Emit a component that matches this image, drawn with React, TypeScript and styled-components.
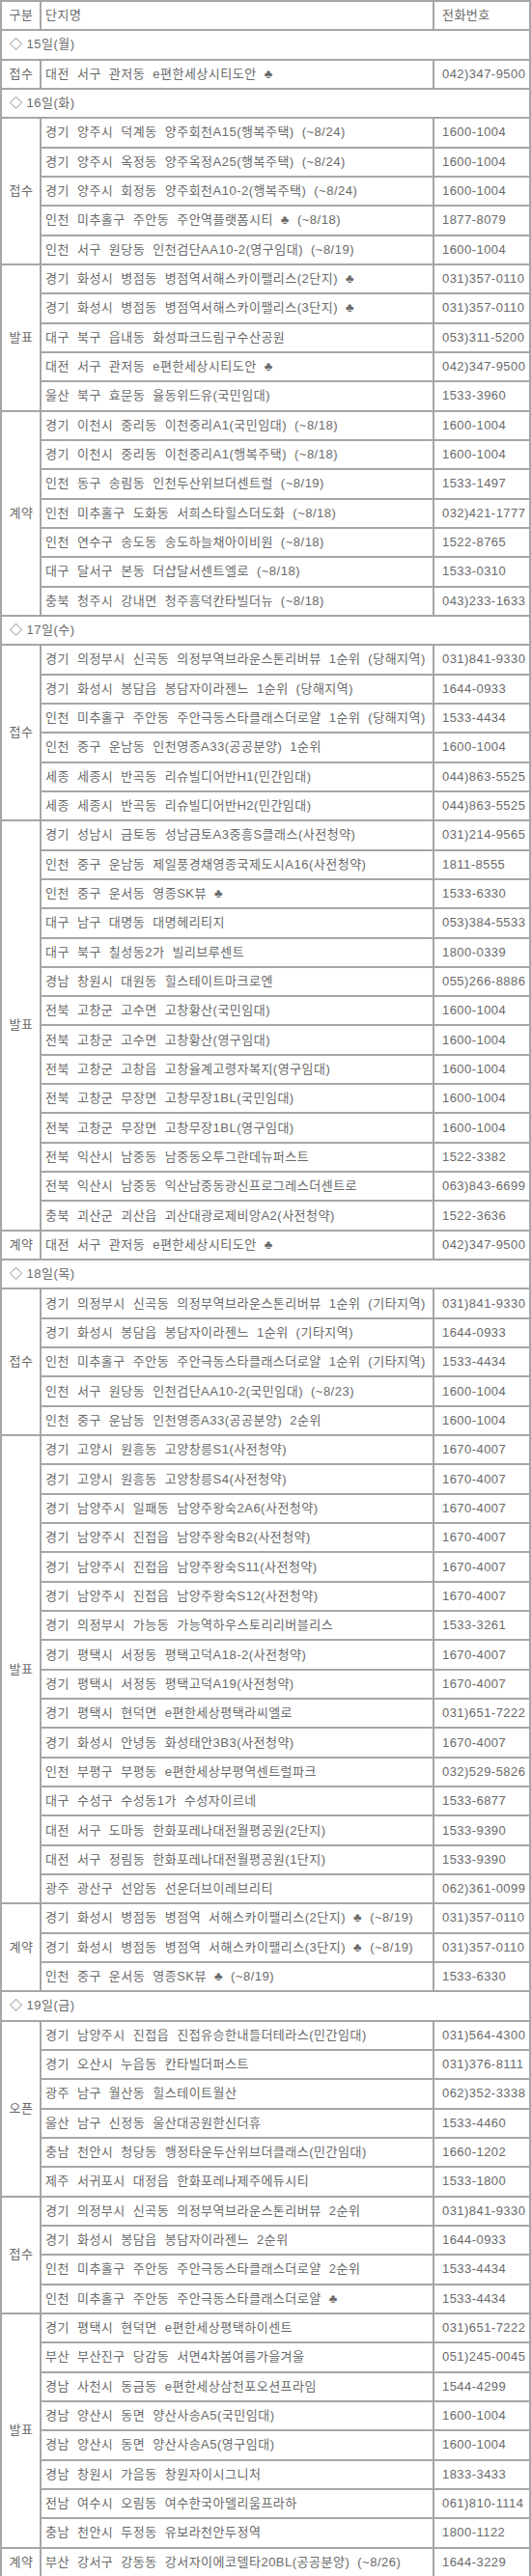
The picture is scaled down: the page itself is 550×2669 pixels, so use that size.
import React from 'react';
import styled, { createGlobalStyle } from 'styled-components';

const GlobalStyle = createGlobalStyle`
  body {
    margin: 0;
    background: #ffffff;
    font-family: 'Liberation Sans', 'Noto Sans CJK KR', sans-serif;
  }
`;

const Table = styled.table`
  width: 550px;
  table-layout: fixed;
  border-collapse: separate;
  border-spacing: 0;
  border: 1px solid #a6a6a6;
  font-family: 'Liberation Sans', 'Noto Sans CJK KR', sans-serif;
  font-size: 13px;
  color: #6a6a6a;
`;

const Cell = styled.td`
  height: 28.33px;
  padding: 0 2px 0 4px;
  border: 1px solid #a6a6a6;
  vertical-align: middle;
  white-space: nowrap;
  overflow: hidden;
  line-height: 16px;
`;

const TypeCell = styled(Cell)`
  padding: 0 0 0 1px;
  text-align: center;
  letter-spacing: 0.5px;
`;

const NameCell = styled(Cell)`
  letter-spacing: 0.5px;
  word-spacing: 3.9px;
`;

const PhoneCell = styled(Cell)`
  padding: 0 0 0 8px;
  letter-spacing: 0.45px;
`;

const DateCell = styled(Cell)`
  padding-left: 8px;
  letter-spacing: 0.5px;
`;

type Group = { type: string; rows: [string, string][] };
type Day = { date: string; groups: Group[] };

const days: Day[] = [
  {
    date: '◇ 15일(월)',
    groups: [{ type: '접수', rows: [['대전 서구 관저동 e편한세상시티도안 ♣', '042)347-9500']] }],
  },
  {
    date: '◇ 16일(화)',
    groups: [
      {
        type: '접수',
        rows: [
          ['경기 양주시 덕계동 양주회천A15(행복주택) (~8/24)', '1600-1004'],
          ['경기 양주시 옥정동 양주옥정A25(행복주택) (~8/24)', '1600-1004'],
          ['경기 양주시 회정동 양주회천A10-2(행복주택) (~8/24)', '1600-1004'],
          ['인천 미추홀구 주안동 주안역플랫폼시티 ♣ (~8/18)', '1877-8079'],
          ['인천 서구 원당동 인천검단AA10-2(영구임대) (~8/19)', '1600-1004'],
        ],
      },
      {
        type: '발표',
        rows: [
          ['경기 화성시 병점동 병점역서해스카이팰리스(2단지) ♣', '031)357-0110'],
          ['경기 화성시 병점동 병점역서해스카이팰리스(3단지) ♣', '031)357-0110'],
          ['대구 북구 읍내동 화성파크드림구수산공원', '053)311-5200'],
          ['대전 서구 관저동 e편한세상시티도안 ♣', '042)347-9500'],
          ['울산 북구 효문동 율동위드유(국민임대)', '1533-3960'],
        ],
      },
      {
        type: '계약',
        rows: [
          ['경기 이천시 중리동 이천중리A1(국민임대) (~8/18)', '1600-1004'],
          ['경기 이천시 중리동 이천중리A1(행복주택) (~8/18)', '1600-1004'],
          ['인천 동구 송림동 인천두산위브더센트럴 (~8/19)', '1533-1497'],
          ['인천 미추홀구 도화동 서희스타힐스더도화 (~8/18)', '032)421-1777'],
          ['인천 연수구 송도동 송도하늘채아이비원 (~8/18)', '1522-8765'],
          ['대구 달서구 본동 더샵달서센트엘로 (~8/18)', '1533-0310'],
          ['충북 청주시 강내면 청주흥덕칸타빌더뉴 (~8/18)', '043)233-1633'],
        ],
      },
    ],
  },
  {
    date: '◇ 17일(수)',
    groups: [
      {
        type: '접수',
        rows: [
          ['경기 의정부시 신곡동 의정부역브라운스톤리버뷰 1순위 (당해지역)', '031)841-9330'],
          ['경기 화성시 봉담읍 봉담자이라젠느 1순위 (당해지역)', '1644-0933'],
          ['인천 미추홀구 주안동 주안극동스타클래스더로얄 1순위 (당해지역)', '1533-4434'],
          ['인천 중구 운남동 인천영종A33(공공분양) 1순위', '1600-1004'],
          ['세종 세종시 반곡동 리슈빌디어반H1(민간임대)', '044)863-5525'],
          ['세종 세종시 반곡동 리슈빌디어반H2(민간임대)', '044)863-5525'],
        ],
      },
      {
        type: '발표',
        rows: [
          ['경기 성남시 금토동 성남금토A3중흥S클래스(사전청약)', '031)214-9565'],
          ['인천 중구 운남동 제일풍경채영종국제도시A16(사전청약)', '1811-8555'],
          ['인천 중구 운서동 영종SK뷰 ♣', '1533-6330'],
          ['대구 남구 대명동 대명헤리티지', '053)384-5533'],
          ['대구 북구 칠성동2가 빌리브루센트', '1800-0339'],
          ['경남 창원시 대원동 힐스테이트마크로엔', '055)266-8886'],
          ['전북 고창군 고수면 고창황산(국민임대)', '1600-1004'],
          ['전북 고창군 고수면 고창황산(영구임대)', '1600-1004'],
          ['전북 고창군 고창읍 고창율계고령자복지(영구임대)', '1600-1004'],
          ['전북 고창군 무장면 고창무장1BL(국민임대)', '1600-1004'],
          ['전북 고창군 무장면 고창무장1BL(영구임대)', '1600-1004'],
          ['전북 익산시 남중동 남중동오투그란데뉴퍼스트', '1522-3382'],
          ['전북 익산시 남중동 익산남중동광신프로그레스더센트로', '063)843-6699'],
          ['충북 괴산군 괴산읍 괴산대광로제비앙A2(사전청약)', '1522-3636'],
        ],
      },
      { type: '계약', rows: [['대전 서구 관저동 e편한세상시티도안 ♣', '042)347-9500']] },
    ],
  },
  {
    date: '◇ 18일(목)',
    groups: [
      {
        type: '접수',
        rows: [
          ['경기 의정부시 신곡동 의정부역브라운스톤리버뷰 1순위 (기타지역)', '031)841-9330'],
          ['경기 화성시 봉담읍 봉담자이라젠느 1순위 (기타지역)', '1644-0933'],
          ['인천 미추홀구 주안동 주안극동스타클래스더로얄 1순위 (기타지역)', '1533-4434'],
          ['인천 서구 원당동 인천검단AA10-2(국민임대) (~8/23)', '1600-1004'],
          ['인천 중구 운남동 인천영종A33(공공분양) 2순위', '1600-1004'],
        ],
      },
      {
        type: '발표',
        rows: [
          ['경기 고양시 원흥동 고양창릉S1(사전청약)', '1670-4007'],
          ['경기 고양시 원흥동 고양창릉S4(사전청약)', '1670-4007'],
          ['경기 남양주시 일패동 남양주왕숙2A6(사전청약)', '1670-4007'],
          ['경기 남양주시 진접읍 남양주왕숙B2(사전청약)', '1670-4007'],
          ['경기 남양주시 진접읍 남양주왕숙S11(사전청약)', '1670-4007'],
          ['경기 남양주시 진접읍 남양주왕숙S12(사전청약)', '1670-4007'],
          ['경기 의정부시 가능동 가능역하우스토리리버블리스', '1533-3261'],
          ['경기 평택시 서정동 평택고덕A18-2(사전청약)', '1670-4007'],
          ['경기 평택시 서정동 평택고덕A19(사전청약)', '1670-4007'],
          ['경기 평택시 현덕면 e편한세상평택라씨엘로', '031)651-7222'],
          ['경기 화성시 안녕동 화성태안3B3(사전청약)', '1670-4007'],
          ['인천 부평구 부평동 e편한세상부평역센트럴파크', '032)529-5826'],
          ['대구 수성구 수성동1가 수성자이르네', '1533-6877'],
          ['대전 서구 도마동 한화포레나대전월평공원(2단지)', '1533-9390'],
          ['대전 서구 정림동 한화포레나대전월평공원(1단지)', '1533-9390'],
          ['광주 광산구 선암동 선운더브이레브리티', '062)361-0099'],
        ],
      },
      {
        type: '계약',
        rows: [
          ['경기 화성시 병점동 병점역 서해스카이팰리스(2단지) ♣ (~8/19)', '031)357-0110'],
          ['경기 화성시 병점동 병점역 서해스카이팰리스(3단지) ♣ (~8/19)', '031)357-0110'],
          ['인천 중구 운서동 영종SK뷰 ♣ (~8/19)', '1533-6330'],
        ],
      },
    ],
  },
  {
    date: '◇ 19일(금)',
    groups: [
      {
        type: '오픈',
        rows: [
          ['경기 남양주시 진접읍 진접유승한내들더테라스(민간임대)', '031)564-4300'],
          ['경기 오산시 누읍동 칸타빌더퍼스트', '031)376-8111'],
          ['광주 남구 월산동 힐스테이트월산', '062)352-3338'],
          ['울산 남구 신정동 울산대공원한신더휴', '1533-4460'],
          ['충남 천안시 청당동 행정타운두산위브더클래스(민간임대)', '1660-1202'],
          ['제주 서귀포시 대정읍 한화포레나제주에듀시티', '1533-1800'],
        ],
      },
      {
        type: '접수',
        rows: [
          ['경기 의정부시 신곡동 의정부역브라운스톤리버뷰 2순위', '031)841-9330'],
          ['경기 화성시 봉담읍 봉담자이라젠느 2순위', '1644-0933'],
          ['인천 미추홀구 주안동 주안극동스타클래스더로얄 2순위', '1533-4434'],
          ['인천 미추홀구 주안동 주안극동스타클래스더로얄 ♣', '1533-4434'],
        ],
      },
      {
        type: '발표',
        rows: [
          ['경기 평택시 현덕면 e편한세상평택하이센트', '031)651-7222'],
          ['부산 부산진구 당감동 서면4차봄여름가을겨울', '051)245-0045'],
          ['경남 사천시 동금동 e편한세상삼천포오션프라임', '1544-4299'],
          ['경남 양산시 동면 양산사송A5(국민임대)', '1600-1004'],
          ['경남 양산시 동면 양산사송A5(영구임대)', '1600-1004'],
          ['경남 창원시 가음동 창원자이시그니처', '1833-3433'],
          ['전남 여수시 오림동 여수한국아델리움프라하', '061)810-1114'],
          ['충남 천안시 두정동 유보라천안두정역', '1800-1122'],
        ],
      },
      { type: '계약', rows: [['부산 강서구 강동동 강서자이에코델타20BL(공공분양) (~8/26)', '1644-3229']] },
    ],
  },
];

export default function App() {
  return (
    <>
      <GlobalStyle />
      <Table>
        <colgroup>
          <col style={{ width: 41 }} />
          <col />
          <col style={{ width: 100 }} />
        </colgroup>
        <tbody>
          <tr>
            <TypeCell>구분</TypeCell>
            <NameCell>단지명</NameCell>
            <PhoneCell>전화번호</PhoneCell>
          </tr>
          {days.map((day) => (
            <React.Fragment key={day.date}>
              <tr>
                <DateCell colSpan={3}>{day.date}</DateCell>
              </tr>
              {day.groups.map((group, gi) =>
                group.rows.map(([name, phone], ri) => (
                  <tr key={`${day.date}-${gi}-${ri}`}>
                    {ri === 0 && <TypeCell rowSpan={group.rows.length}>{group.type}</TypeCell>}
                    <NameCell>{name}</NameCell>
                    <PhoneCell>{phone}</PhoneCell>
                  </tr>
                ))
              )}
            </React.Fragment>
          ))}
        </tbody>
      </Table>
    </>
  );
}
